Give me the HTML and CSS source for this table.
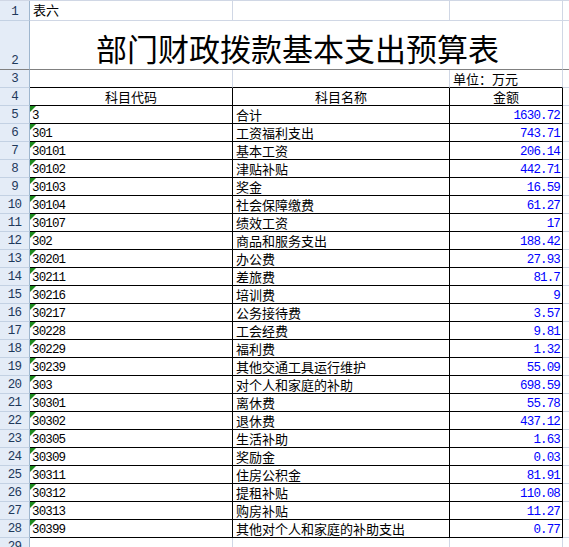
FILE: index.html
```html
<!DOCTYPE html>
<html lang="zh-CN">
<head>
<meta charset="utf-8">
<title>部门财政拨款基本支出预算表</title>
<link rel="stylesheet" href="styles.css">
</head>
<body>
<div class="sheet">
  <!-- row 1 -->
  <div class="rh">1</div>
  <div class="c txt">表六</div>
  <div class="c"></div>
  <div class="c"></div>
  <div class="c d"></div>
  <!-- row 2 -->
  <div class="rh frz">2</div>
  <div class="c title frz">部门财政拨款基本支出预算表</div>
  <div class="c d frz"></div>
  <!-- row 3 -->
  <div class="rh">3</div>
  <div class="c top"></div>
  <div class="c top"></div>
  <div class="c top txt">单位：万元</div>
  <div class="c d"></div>
  <!-- row 4 -->
  <div class="rh">4</div>
  <div class="c t hd">科目代码</div>
  <div class="c t hd">科目名称</div>
  <div class="c t hd">金额</div>
  <div class="c d"></div>

  <div class="rh">5</div><div class="c t code">3</div><div class="c t txt">合计</div><div class="c t amt">1630.72</div><div class="c d"></div>
  <div class="rh">6</div><div class="c t code">301</div><div class="c t txt">工资福利支出</div><div class="c t amt">743.71</div><div class="c d"></div>
  <div class="rh">7</div><div class="c t code">30101</div><div class="c t txt">基本工资</div><div class="c t amt">206.14</div><div class="c d"></div>
  <div class="rh">8</div><div class="c t code">30102</div><div class="c t txt">津贴补贴</div><div class="c t amt">442.71</div><div class="c d"></div>
  <div class="rh">9</div><div class="c t code">30103</div><div class="c t txt">奖金</div><div class="c t amt">16.59</div><div class="c d"></div>
  <div class="rh">10</div><div class="c t code">30104</div><div class="c t txt">社会保障缴费</div><div class="c t amt">61.27</div><div class="c d"></div>
  <div class="rh">11</div><div class="c t code">30107</div><div class="c t txt">绩效工资</div><div class="c t amt">17</div><div class="c d"></div>
  <div class="rh">12</div><div class="c t code">302</div><div class="c t txt">商品和服务支出</div><div class="c t amt">188.42</div><div class="c d"></div>
  <div class="rh">13</div><div class="c t code">30201</div><div class="c t txt">办公费</div><div class="c t amt">27.93</div><div class="c d"></div>
  <div class="rh">14</div><div class="c t code">30211</div><div class="c t txt">差旅费</div><div class="c t amt">81.7</div><div class="c d"></div>
  <div class="rh">15</div><div class="c t code">30216</div><div class="c t txt">培训费</div><div class="c t amt">9</div><div class="c d"></div>
  <div class="rh">16</div><div class="c t code">30217</div><div class="c t txt">公务接待费</div><div class="c t amt">3.57</div><div class="c d"></div>
  <div class="rh">17</div><div class="c t code">30228</div><div class="c t txt">工会经费</div><div class="c t amt">9.81</div><div class="c d"></div>
  <div class="rh">18</div><div class="c t code">30229</div><div class="c t txt">福利费</div><div class="c t amt">1.32</div><div class="c d"></div>
  <div class="rh">19</div><div class="c t code">30239</div><div class="c t txt">其他交通工具运行维护</div><div class="c t amt">55.09</div><div class="c d"></div>
  <div class="rh">20</div><div class="c t code">303</div><div class="c t txt">对个人和家庭的补助</div><div class="c t amt">698.59</div><div class="c d"></div>
  <div class="rh">21</div><div class="c t code">30301</div><div class="c t txt">离休费</div><div class="c t amt">55.78</div><div class="c d"></div>
  <div class="rh">22</div><div class="c t code">30302</div><div class="c t txt">退休费</div><div class="c t amt">437.12</div><div class="c d"></div>
  <div class="rh">23</div><div class="c t code">30305</div><div class="c t txt">生活补助</div><div class="c t amt">1.63</div><div class="c d"></div>
  <div class="rh">24</div><div class="c t code">30309</div><div class="c t txt">奖励金</div><div class="c t amt">0.03</div><div class="c d"></div>
  <div class="rh">25</div><div class="c t code">30311</div><div class="c t txt">住房公积金</div><div class="c t amt">81.91</div><div class="c d"></div>
  <div class="rh">26</div><div class="c t code">30312</div><div class="c t txt">提租补贴</div><div class="c t amt">110.08</div><div class="c d"></div>
  <div class="rh">27</div><div class="c t code">30313</div><div class="c t txt">购房补贴</div><div class="c t amt">11.27</div><div class="c d"></div>
  <div class="rh">28</div><div class="c t code">30399</div><div class="c t txt">其他对个人和家庭的补助支出</div><div class="c t amt">0.77</div><div class="c d"></div>
  <!-- row 29 -->
  <div class="rh">29</div><div class="c"></div><div class="c"></div><div class="c"></div><div class="c d"></div>
</div>
</body>
</html>
```
FILE: styles.css
```css
html, body {
  margin: 0;
  padding: 0;
  background: #ffffff;
  overflow: hidden;
}

body {
  width: 569px;
  height: 547px;
  font-family: "Noto Sans CJK SC", "Liberation Sans", sans-serif;
  font-size: 13px;
  color: #000000;
}

.sheet {
  display: grid;
  grid-template-columns: 30px 203px 217px 113px 1fr;
  grid-template-rows: 20px 49px 18px 18px repeat(24, 18px) 18px;
  border-top: 1px solid #d0d7e5;
  width: 569px;
}

.sheet > div {
  box-sizing: border-box;
  min-width: 0;
  overflow: hidden;
  white-space: nowrap;
}

/* row headers */
.rh {
  background: #e4ecf7;
  border-right: 1px solid #9eb6ce;
  border-bottom: 1px solid #c3d1e3;
  color: #1e395b;
  font-family: "Liberation Mono", monospace;
  font-size: 12.5px;
  letter-spacing: -0.85px;
  text-align: center;
  display: flex;
  align-items: flex-end;
  justify-content: center;
  padding-bottom: 1px;
  line-height: 14px;
}

/* ordinary cells */
.c {
  position: relative;
  border-right: 1px solid #d0d7e5;
  border-bottom: 1px solid #d0d7e5;
  line-height: 17px;
}

.txt {
  padding-left: 3px;
}

.d {
  border-right: none;
}

.top {
  border-bottom-color: #000000;
}

.frz {
  border-bottom-color: #808080;
}

.title {
  grid-column: 2 / 5;
  display: flex;
  align-items: flex-end;
  justify-content: center;
  font-size: 31px;
  line-height: 31px;
  padding-bottom: 6px;
  padding-left: 3px;
}

/* bordered table */
.t {
  border-right-color: #000000;
  border-bottom-color: #000000;
}

.hd {
  text-align: center;
}

.code {
  font-family: "Liberation Mono", monospace;
  font-size: 12.5px;
  letter-spacing: -0.85px;
  line-height: 14px;
  padding-top: 3px;
  padding-left: 2px;
}

.code::before {
  content: "";
  position: absolute;
  left: 0;
  top: 0;
  width: 0;
  height: 0;
  border-top: 6px solid #1d8a1d;
  border-right: 6px solid transparent;
}

.amt {
  font-family: "Liberation Mono", monospace;
  font-size: 12.5px;
  letter-spacing: -0.85px;
  line-height: 14px;
  padding-top: 3px;
  padding-right: 2px;
  text-align: right;
  color: #0000ff;
}
```
